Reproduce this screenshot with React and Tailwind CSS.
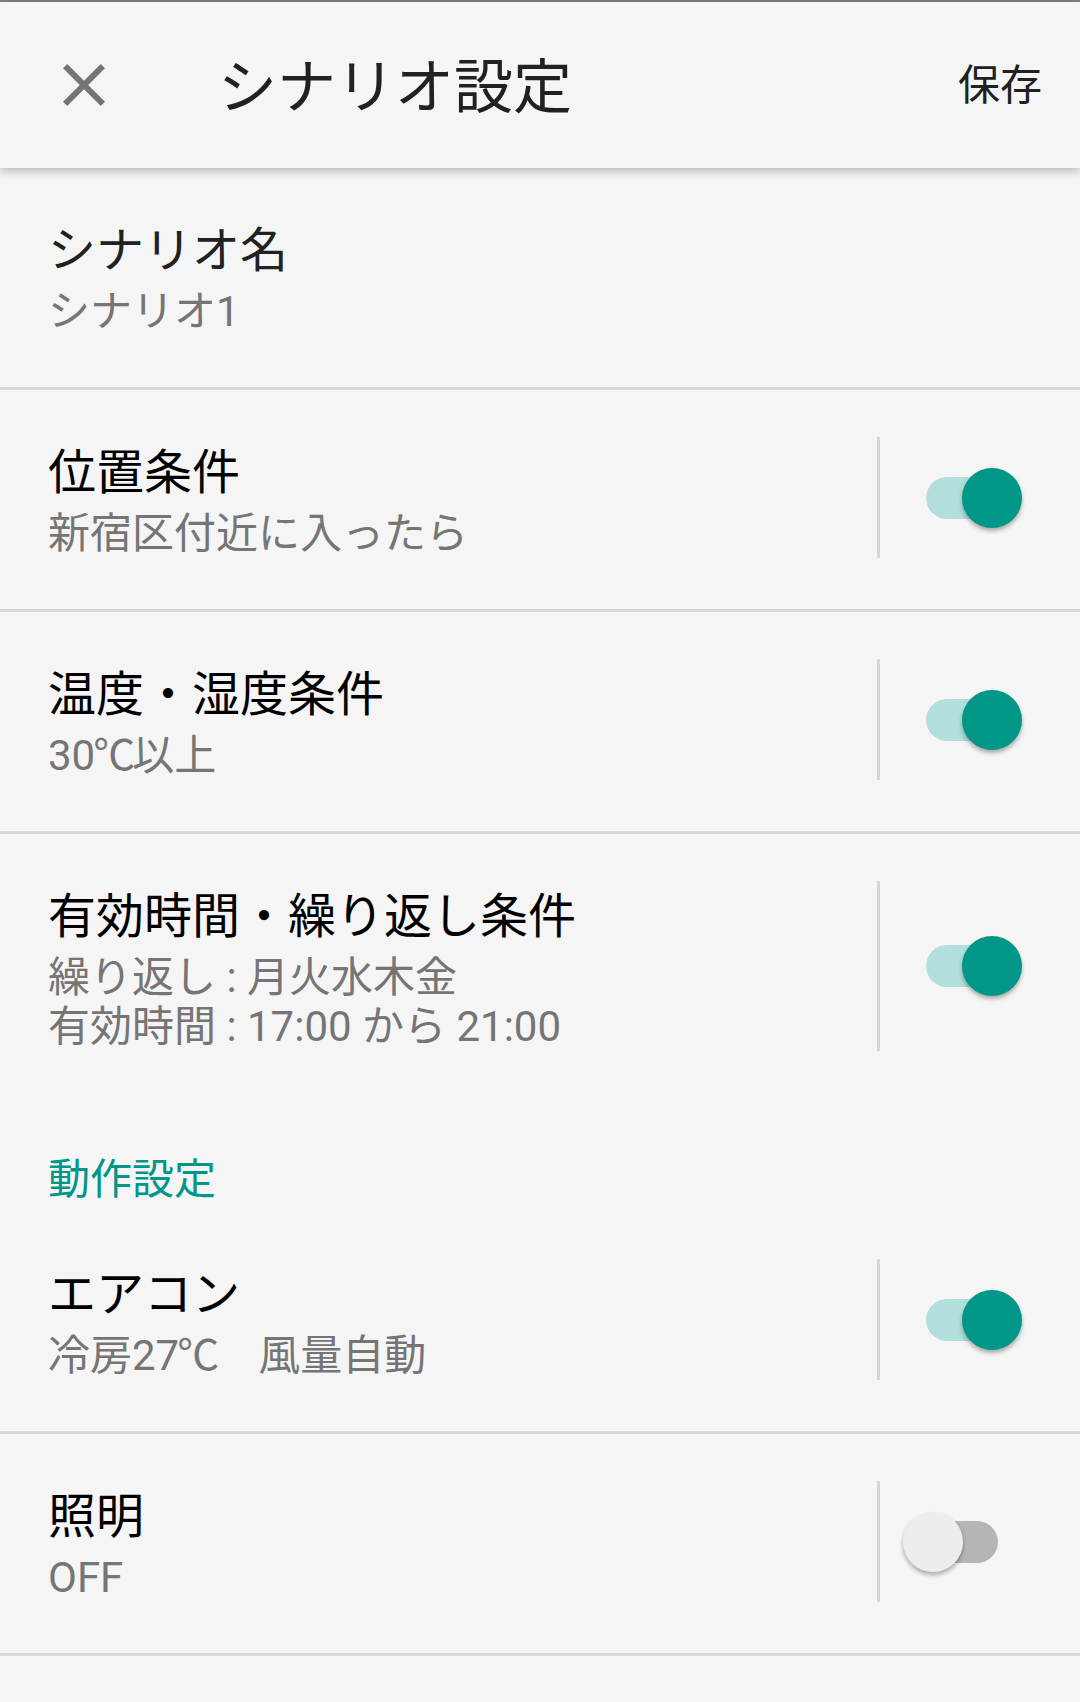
const font = { fontFamily: '"Roboto", "Noto Sans CJK JP", sans-serif' }

const Switch = ({ on }) => (
  <div className={`relative w-[72px] h-[42px] rounded-full ${on ? 'bg-[#b2dfdb]' : 'bg-[#b5b5b5]'}`}>
    <div
      className={`absolute -top-[9px] w-[60px] h-[60px] rounded-full shadow-[0_3px_4px_rgba(0,0,0,0.3)] ${
        on ? '-right-[24px] bg-[#009688]' : '-left-[23px] bg-[#ededed]'
      }`}
    />
  </div>
)

const Divider = () => <div className="h-[3px] bg-[#d8d8d8]" />

// the ℃ in the screenshot is tighter than Roboto's
const withDegree = (text) =>
  text.split('℃').flatMap((part, i) =>
    i === 0
      ? [part]
      : [
          <span key={i} className="-ml-[2px] tracking-[-3px]">
            ℃
          </span>,
          part,
        ]
  )

const Row = ({ title, lines, toggle, dark = true }) => (
  <div className="flex items-stretch pt-[47px] pb-[51px] pl-[48px]">
    <div className="flex-1 flex flex-col justify-center">
      <div className={`h-[72px] text-[48px] leading-[72px] ${dark ? 'text-black' : 'text-[#212121]'}`}>{title}</div>
      {lines.map((l) => (
        <div key={l} className="h-[49px] text-[42px] leading-[49px] text-[#757575] whitespace-pre">
          {withDegree(l)}
        </div>
      ))}
    </div>
    {toggle !== undefined && (
      <>
        <div className="w-[3px] bg-[#d6d6d6]" />
        <div className="w-[200px] flex items-center pl-[46px]">
          <Switch on={toggle} />
        </div>
      </>
    )}
  </div>
)

export default function App() {
  return (
    <div className="min-h-[1702px] bg-[#f5f5f5]" style={font}>
      <div className="h-[2px] bg-[#7c7c7c]" />
      <header className="relative z-10 h-[166px] flex items-center bg-[#f5f5f5] shadow-[0_4px_8px_rgba(0,0,0,0.22)]">
        <svg viewBox="0 0 24 24" className="ml-[48px] w-[72px] h-[72px]" fill="#757575">
          <path d="M19 6.41L17.59 5 12 10.59 6.41 5 5 6.41 10.59 12 5 17.59 6.41 19 12 13.41 17.59 19 19 17.59 13.41 12z" />
        </svg>
        <h1 className="ml-[98px] pt-[4px] flex-1 text-[59px] leading-none text-[#212121]">シナリオ設定</h1>
        <div className="mr-[38px] pt-[2px] text-[42px] leading-none text-[#212121]">保存</div>
      </header>

      <Row title="シナリオ名" lines={['シナリオ1']} dark={false} />
      <Divider />
      <Row title="位置条件" lines={['新宿区付近に入ったら']} toggle={true} />
      <Divider />
      <Row title="温度・湿度条件" lines={['30℃以上']} toggle={true} />
      <Divider />
      <Row title="有効時間・繰り返し条件" lines={['繰り返し : 月火水木金', '有効時間 : 17:00 から 21:00']} toggle={true} />

      <div className="pt-[54px] pb-[8px] pl-[48px] text-[42px] leading-[48px] text-[#009688]">動作設定</div>

      <Row title="エアコン" lines={['冷房27℃　風量自動']} toggle={true} />
      <Divider />
      <Row title="照明" lines={['OFF']} toggle={false} />
      <Divider />
    </div>
  )
}
